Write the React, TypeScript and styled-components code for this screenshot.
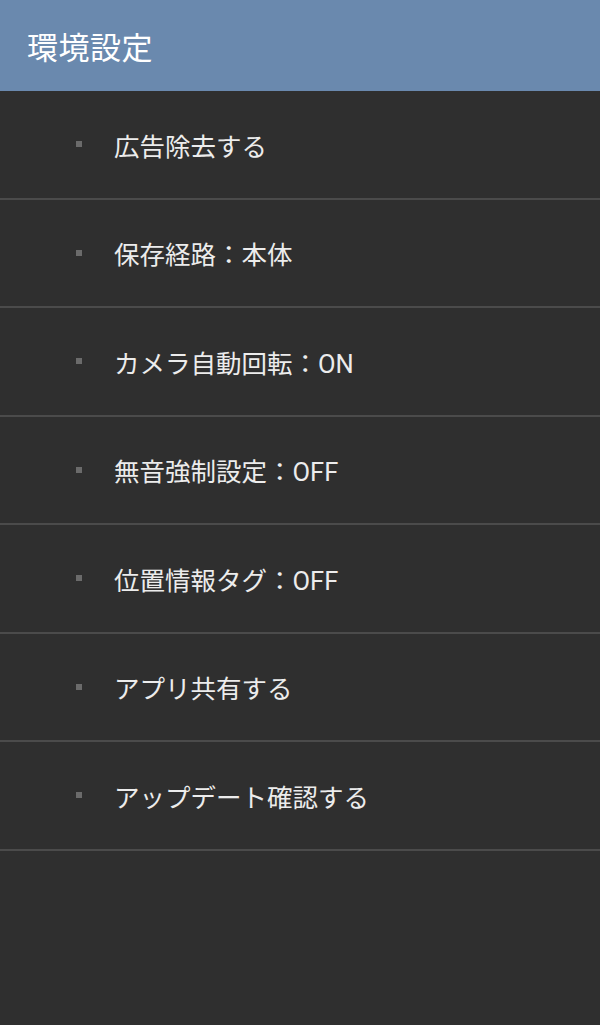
import React from 'react'
import styled, { createGlobalStyle } from 'styled-components'

const GlobalStyle = createGlobalStyle`
  html, body {
    margin: 0;
    padding: 0;
    background: #2f2f2f;
  }
  body {
    font-family: Roboto, 'Noto Sans CJK JP', sans-serif;
  }
`

const Page = styled.div`
  width: 600px;
  height: 1025px;
  background: #2f2f2f;
  display: flex;
  flex-direction: column;
`

const Header = styled.div`
  height: 91px;
  background: #6a89ae;
  display: flex;
  align-items: center;
  padding-left: 27px;
  box-sizing: border-box;
`

const Title = styled.h1`
  margin: 0;
  font-size: 31px;
  font-weight: 400;
  color: #ffffff;
  letter-spacing: 0.5px;
`

const MenuList = styled.ul`
  list-style: none;
  margin: 0;
  padding: 0;
`

const MenuItem = styled.li`
  height: 106.5px;
  border-bottom: 2px solid #4b4b4b;
  display: flex;
  align-items: center;
`

const Bullet = styled.span`
  width: 6px;
  height: 6px;
  background: #6b6b6b;
  margin-left: 76px;
  margin-right: 32px;
  flex-shrink: 0;
`

const Label = styled.span`
  font-size: 25.5px;
  color: #ececec;
`

const items = [
  '広告除去する',
  '保存経路：本体',
  'カメラ自動回転：ON',
  '無音強制設定：OFF',
  '位置情報タグ：OFF',
  'アプリ共有する',
  'アップデート確認する'
]

const App: React.FC = () => {
  return (
    <Page>
      <GlobalStyle />
      <Header>
        <Title>環境設定</Title>
      </Header>
      <MenuList>
        {items.map((item) => (
          <MenuItem key={item}>
            <Bullet />
            <Label>{item}</Label>
          </MenuItem>
        ))}
      </MenuList>
    </Page>
  )
}

export default App
